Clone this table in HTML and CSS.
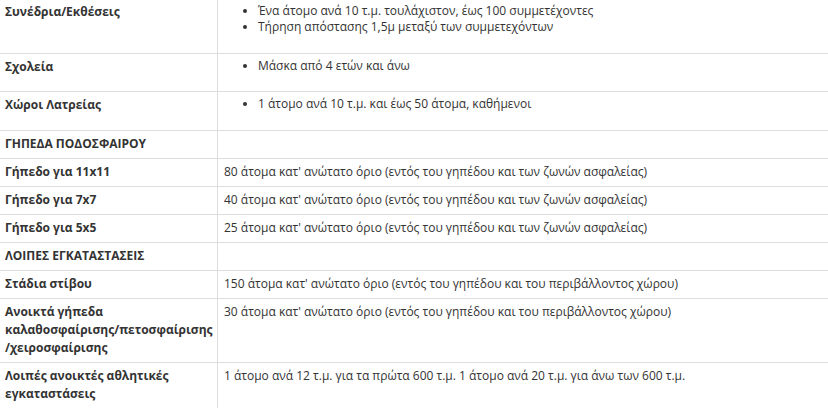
FILE: index.html
```html
<!DOCTYPE html>
<html lang="el">
<head>
<meta charset="utf-8">
<link rel="stylesheet" href="styles.css">
</head>
<body>
<table class="rules">
  <tbody>
    <tr class="first">
      <td class="label">Συνέδρια/Εκθέσεις</td>
      <td class="value">
        <ul class="bullets">
          <li>Ένα άτομο ανά 10 τ.μ. τουλάχιστον, έως 100 συμμετέχοντες</li>
          <li>Τήρηση απόστασης 1,5μ μεταξύ των συμμετεχόντων</li>
        </ul>
      </td>
    </tr>
    <tr>
      <td class="label">Σχολεία</td>
      <td class="value">
        <ul class="bullets"><li>Μάσκα από 4 ετών και άνω</li></ul>
      </td>
    </tr>
    <tr>
      <td class="label">Χώροι Λατρείας</td>
      <td class="value">
        <ul class="bullets"><li>1 άτομο ανά 10 τ.μ. και έως 50 άτομα, καθήμενοι</li></ul>
      </td>
    </tr>
    <tr>
      <td class="label">ΓΗΠΕΔΑ ΠΟΔΟΣΦΑΙΡΟΥ</td>
      <td class="value"></td>
    </tr>
    <tr>
      <td class="label">Γήπεδο για 11x11</td>
      <td class="value">80 άτομα κατ' ανώτατο όριο (εντός του γηπέδου και των ζωνών ασφαλείας)</td>
    </tr>
    <tr>
      <td class="label">Γήπεδο για 7x7</td>
      <td class="value">40 άτομα κατ' ανώτατο όριο (εντός του γηπέδου και των ζωνών ασφαλείας)</td>
    </tr>
    <tr>
      <td class="label">Γήπεδο για 5x5</td>
      <td class="value">25 άτομα κατ' ανώτατο όριο (εντός του γηπέδου και των ζωνών ασφαλείας)</td>
    </tr>
    <tr>
      <td class="label">ΛΟΙΠΕΣ ΕΓΚΑΤΑΣΤΑΣΕΙΣ</td>
      <td class="value"></td>
    </tr>
    <tr>
      <td class="label">Στάδια στίβου</td>
      <td class="value">150 άτομα κατ' ανώτατο όριο (εντός του γηπέδου και του περιβάλλοντος χώρου)</td>
    </tr>
    <tr>
      <td class="label">Ανοικτά γήπεδα<br>καλαθοσφαίρισης/πετοσφαίρισης<br>/χειροσφαίρισης</td>
      <td class="value">30 άτομα κατ' ανώτατο όριο (εντός του γηπέδου και του περιβάλλοντος χώρου)</td>
    </tr>
    <tr>
      <td class="label">Λοιπές ανοικτές αθλητικές<br>εγκαταστάσεις</td>
      <td class="value">1 άτομο ανά 12 τ.μ. για τα πρώτα 600 τ.μ. 1 άτομο ανά 20 τ.μ. για άνω των 600 τ.μ.</td>
    </tr>
    <tr>
      <td class="label">&nbsp;</td>
      <td class="value">&nbsp;</td>
    </tr>
  </tbody>
</table>
</body>
</html>
```

FILE: styles.css
```css
html, body {
  margin: 0;
  padding: 0;
  background: #ffffff;
}

body {
  font-family: "Open Sans", "Liberation Sans", sans-serif;
  font-size: 12px;
  line-height: 18px;
  color: #333333;
  overflow: hidden;
}

.rules {
  border-collapse: collapse;
  width: calc(100% + 4px);
  margin-left: -2px;
  margin-top: 0;
  table-layout: fixed;
}

.rules td {
  border: 1px solid #dddddd;
  padding: 4px 6px 5px 6px;
  vertical-align: top;
  text-align: left;
}

.rules .first td {
  border-top: 0;
  padding-top: 3px;
}

.rules .label {
  width: 206px;
  font-weight: 700;
  white-space: nowrap;
}

.bullets {
  margin: 0 0 12.5px 0;
  padding-left: 34px;
  list-style: disc;
}

.bullets li {
  line-height: 16px;
}
```
